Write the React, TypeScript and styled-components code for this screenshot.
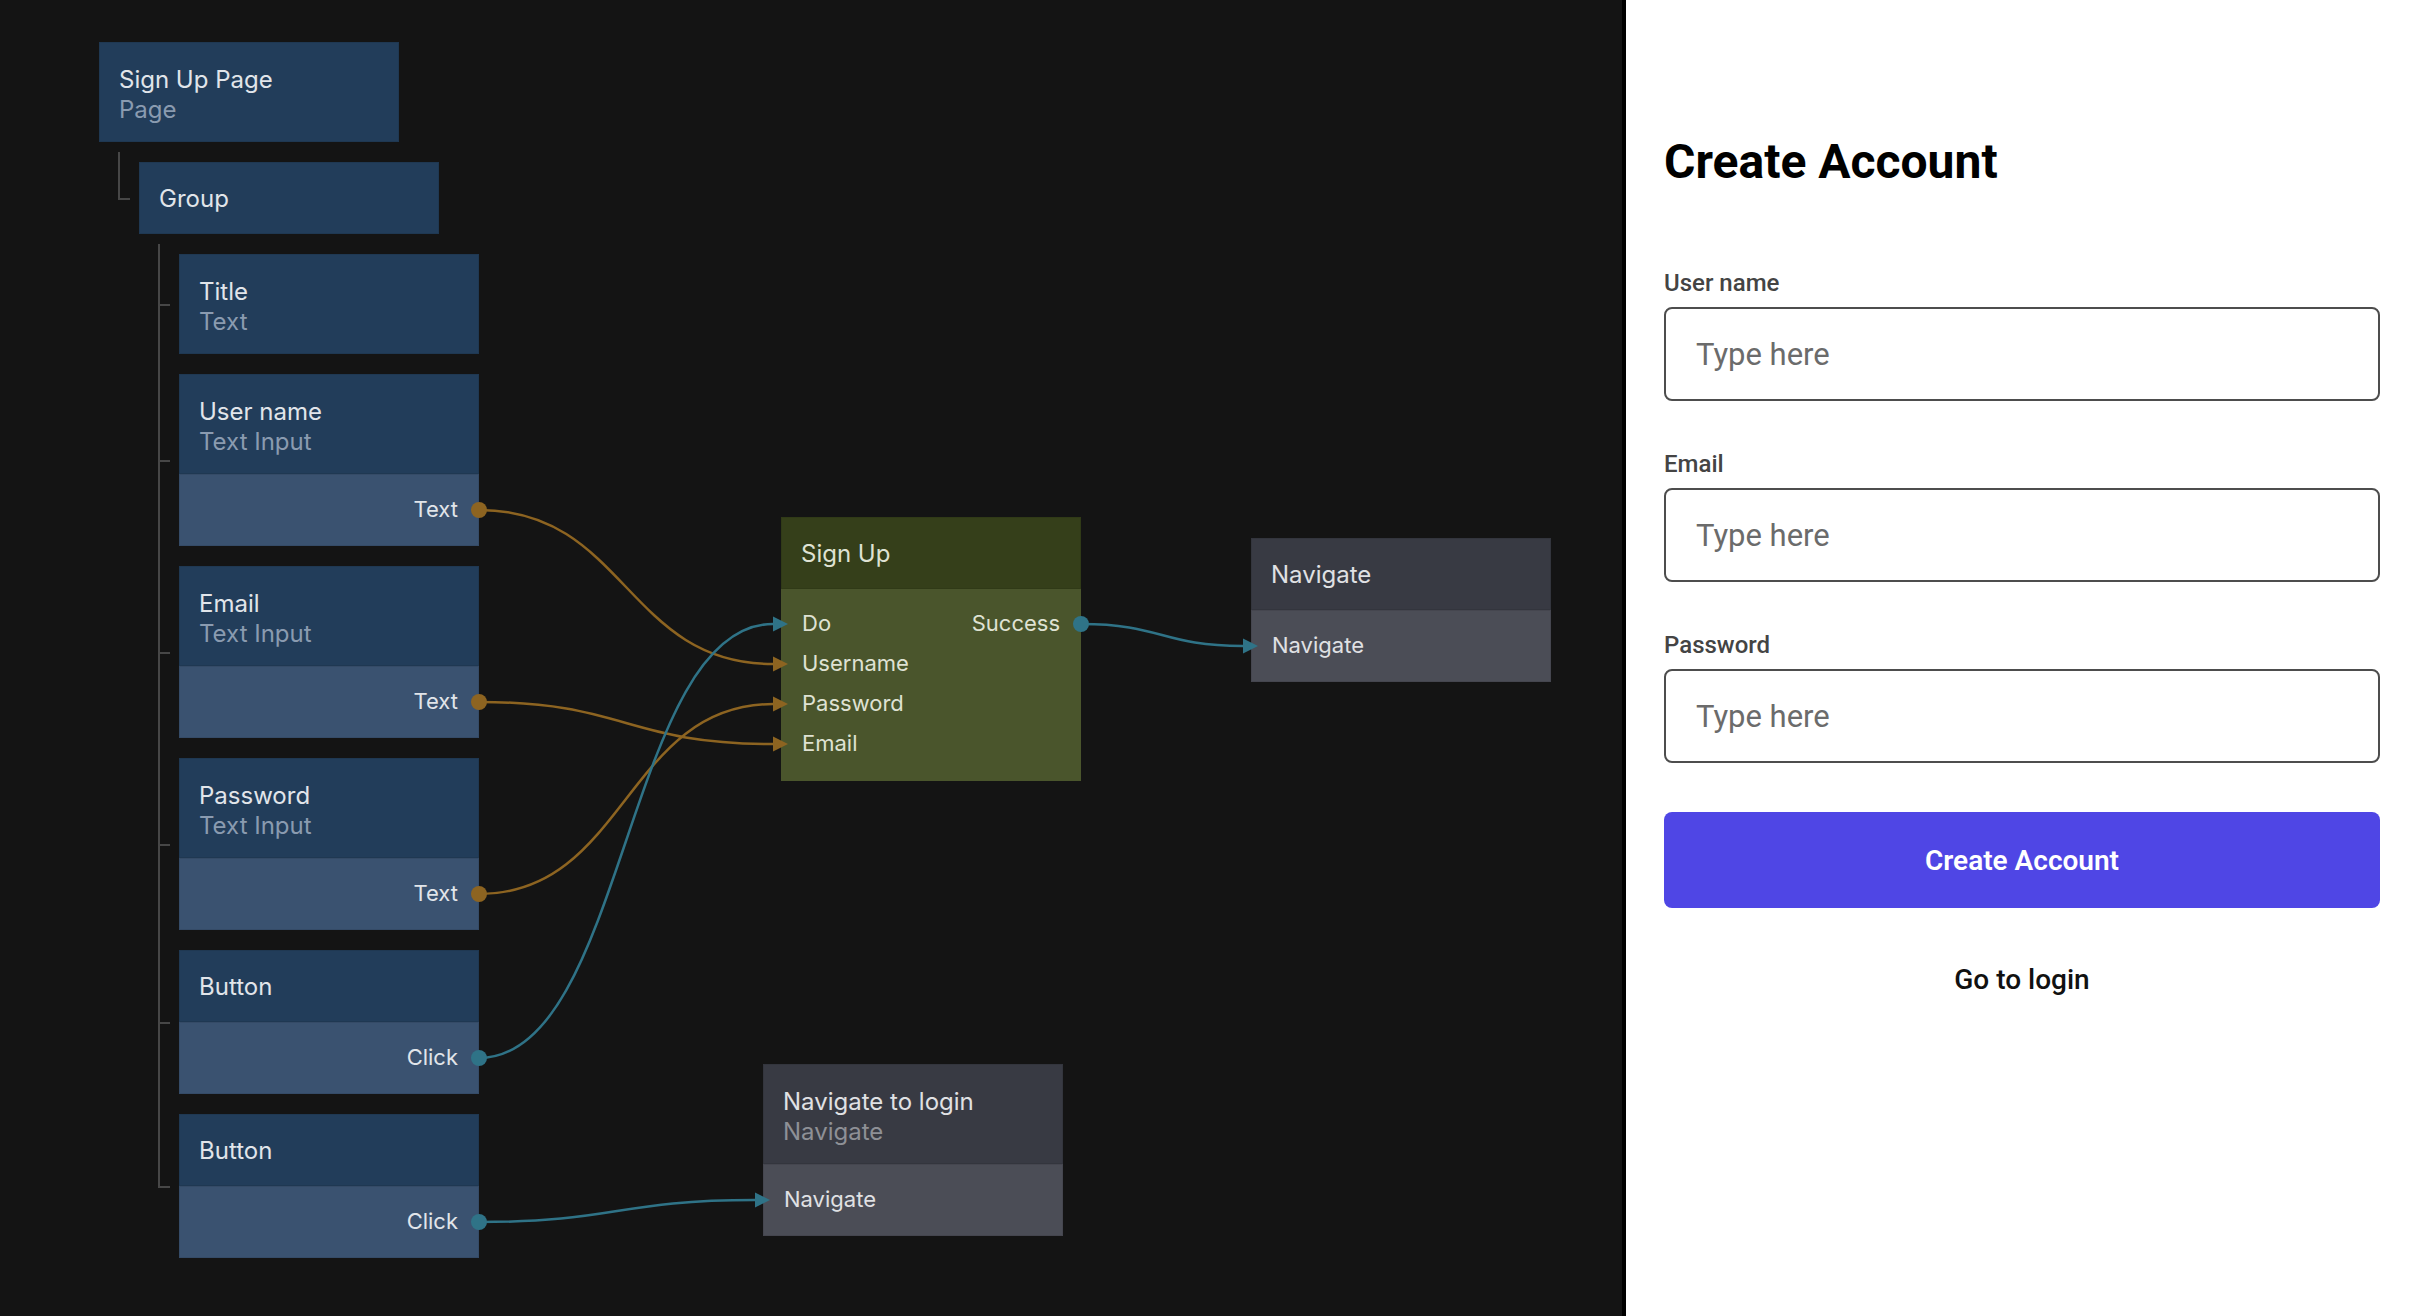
import React from 'react';
import styled, { createGlobalStyle, css } from 'styled-components';

const GlobalStyle = createGlobalStyle`
  html, body {
    margin: 0;
    padding: 0;
    width: 2418px;
    height: 1316px;
    overflow: hidden;
    background: #141414;
  }
  #root { height: 100%; }
  * { box-sizing: border-box; }
`;

type Variant = 'blue' | 'green' | 'gray';

const palette: Record<Variant, { head: string; body: string; title: string; sub: string }> = {
  blue: { head: '#223d5a', body: '#3a5270', title: '#e1e5ea', sub: '#8a9bb0' },
  green: { head: '#353f1a', body: '#4a552c', title: '#dfe2d3', sub: '#a0a68a' },
  gray: { head: '#383a43', body: '#4b4d56', title: '#e0e1e4', sub: '#8e9096' },
};

const ORANGE = '#8d6421';
const TEAL = '#2f7387';
const LINE = '#474747';

/* ---------- page ---------- */

const Screen = styled.div`
  display: flex;
  width: 2418px;
  height: 1316px;
`;

const Canvas = styled.div`
  position: relative;
  flex: 0 0 1622px;
  height: 100%;
  background: #141414;
  font-family: Inter, 'Noto Sans', sans-serif;
  overflow: hidden;
`;

/* ---------- nodes ---------- */

type TreePos = 'first' | 'middle' | 'last' | 'only';

const NodeCard = styled.div<{ $tree?: TreePos }>`
  position: relative;
  width: 300px;
  display: flex;
  flex-direction: column;
  flex: none;

  ${({ $tree }) =>
    $tree &&
    css`
      &::before {
        content: '';
        position: absolute;
        left: -21px;
        width: 10px;
        top: ${$tree === 'first' || $tree === 'only' ? '-10px' : '-20px'};
        height: calc(50% + ${$tree === 'first' || $tree === 'only' ? '10px' : '20px'});
        border-left: 2px solid ${LINE};
        border-bottom: 2px solid ${LINE};
      }
    `}

  ${({ $tree }) =>
    ($tree === 'first' || $tree === 'middle') &&
    css`
      &::after {
        content: '';
        position: absolute;
        left: -21px;
        top: 50%;
        bottom: 0;
        border-left: 2px solid ${LINE};
      }
    `}
`;

const FloatingNode = styled(NodeCard)`
  position: absolute;
`;

const NodeHeader = styled.div<{ $variant: Variant; $tall?: boolean }>`
  height: ${({ $tall }) => ($tall ? 100 : 72)}px;
  padding: ${({ $tall }) => ($tall ? 5 : 1)}px 20px 0 20px;
  display: flex;
  flex-direction: column;
  justify-content: center;
  background: ${({ $variant }) => palette[$variant].head};
  box-shadow: inset 0 0 0 1px rgba(0, 0, 0, 0.08);
`;

const NodeTitle = styled.div<{ $variant: Variant }>`
  font-size: 24px;
  line-height: 30px;
  color: ${({ $variant }) => palette[$variant].title};
  white-space: nowrap;
`;

const NodeSubtitle = styled.div<{ $variant: Variant }>`
  font-size: 24px;
  line-height: 30px;
  color: ${({ $variant }) => palette[$variant].sub};
  white-space: nowrap;
`;

const PortRow = styled.div<{ $variant: Variant; $side: 'in' | 'out' }>`
  height: 72px;
  display: flex;
  align-items: center;
  justify-content: ${({ $side }) => ($side === 'out' ? 'flex-end' : 'flex-start')};
  padding: 0 21px 3px 21px;
  background: ${({ $variant }) => palette[$variant].body};
  font-size: 22px;
  line-height: 30px;
  color: ${({ $variant }) => palette[$variant].title};
  box-shadow: inset 0 0 0 1px rgba(0, 0, 0, 0.08);
`;

const PortList = styled.div<{ $variant: Variant }>`
  display: flex;
  flex-direction: column;
  padding: 15px 21px 17px 21px;
  background: ${({ $variant }) => palette[$variant].body};
  color: ${({ $variant }) => palette[$variant].title};
`;

const PortLine = styled.div`
  height: 40px;
  padding-bottom: 2px;
  display: flex;
  align-items: center;
  justify-content: space-between;
  font-size: 22px;
  line-height: 30px;
`;

/* ---------- tree ---------- */

const Tree = styled.div`
  position: absolute;
  left: 99px;
  top: 42px;
  display: flex;
  flex-direction: column;
  gap: 20px;
`;

const Children = styled.div`
  display: flex;
  flex-direction: column;
  gap: 20px;
  margin-left: 40px;
`;

/* ---------- wires ---------- */

const WireLayer = styled.svg`
  position: absolute;
  left: 0;
  top: 0;
  width: 100%;
  height: 100%;
  pointer-events: none;
  overflow: visible;
`;

type Wire = { from: [number, number]; to: [number, number]; color: string };

const wires: Wire[] = [
  { from: [479, 510], to: [781, 664], color: ORANGE },
  { from: [479, 702], to: [781, 744], color: ORANGE },
  { from: [479, 894], to: [781, 704], color: ORANGE },
  { from: [479, 1058], to: [781, 624], color: TEAL },
  { from: [479, 1222], to: [763, 1200], color: TEAL },
  { from: [1081, 624], to: [1251, 646], color: TEAL },
];

const wirePath = (w: Wire) => {
  const [x0, y0] = w.from;
  const x1 = w.to[0] - 8;
  const y1 = w.to[1];
  const c = Math.abs(x1 - x0) / 2;
  return `M ${x0} ${y0} C ${x0 + c} ${y0}, ${x1 - c} ${y1}, ${x1} ${y1}`;
};

const arrow = (w: Wire) => {
  const [x, y] = w.to;
  return `${x - 8},${y - 7.5} ${x + 7},${y} ${x - 8},${y + 7.5}`;
};

/* ---------- preview panel ---------- */

const Panel = styled.div`
  flex: 1;
  height: 100%;
  background: #ffffff;
  border-left: 4px solid #000;
  padding: 135px 38px 0 38px;
  display: flex;
  flex-direction: column;
  font-family: Roboto, 'Liberation Sans', sans-serif;
`;

const Heading = styled.h1`
  margin: 0 0 81px 0;
  font-size: 48px;
  line-height: 53px;
  font-weight: 700;
  color: #000;
`;

const Form = styled.div`
  display: flex;
  flex-direction: column;
  gap: 49px;
`;

const Field = styled.label`
  display: flex;
  flex-direction: column;
  gap: 10px;
`;

const FieldLabel = styled.span`
  font-size: 24px;
  line-height: 28px;
  font-weight: 500;
  color: #444;
`;

const Input = styled.input`
  height: 94px;
  width: 100%;
  border: 2px solid #4d4d4d;
  border-radius: 8px;
  padding: 0 30px;
  font-family: Roboto, 'Liberation Sans', sans-serif;
  font-size: 31px;
  color: #222;
  background: #fff;
  outline: none;
  &::placeholder {
    color: #6b6b6b;
    opacity: 1;
  }
`;

const PrimaryButton = styled.button`
  height: 96px;
  width: 100%;
  border: none;
  border-radius: 8px;
  background: #4f46e5;
  color: #fff;
  font-family: Roboto, 'Liberation Sans', sans-serif;
  font-size: 28px;
  font-weight: 600;
  cursor: pointer;
`;

const LinkButton = styled.button`
  height: 44px;
  width: 100%;
  border: none;
  background: transparent;
  color: #111;
  font-family: Roboto, 'Liberation Sans', sans-serif;
  font-size: 28px;
  font-weight: 500;
  cursor: pointer;
`;

/* ---------- composition ---------- */

type TreeNodeProps = {
  title: string;
  subtitle?: string;
  port?: string;
  tree?: TreePos;
};

const TreeNode: React.FC<TreeNodeProps> = ({ title, subtitle, port, tree }) => (
  <NodeCard $tree={tree}>
    <NodeHeader $variant="blue" $tall={!!subtitle}>
      <NodeTitle $variant="blue">{title}</NodeTitle>
      {subtitle && <NodeSubtitle $variant="blue">{subtitle}</NodeSubtitle>}
    </NodeHeader>
    {port && (
      <PortRow $variant="blue" $side="out">
        {port}
      </PortRow>
    )}
  </NodeCard>
);

const children: TreeNodeProps[] = [
  { title: 'Title', subtitle: 'Text' },
  { title: 'User name', subtitle: 'Text Input', port: 'Text' },
  { title: 'Email', subtitle: 'Text Input', port: 'Text' },
  { title: 'Password', subtitle: 'Text Input', port: 'Text' },
  { title: 'Button', port: 'Click' },
  { title: 'Button', port: 'Click' },
];

export default function App() {
  return (
    <>
      <GlobalStyle />
      <Screen>
        <Canvas>
          <Tree>
            <TreeNode title="Sign Up Page" subtitle="Page" />
            <Children>
              <NodeCard $tree="only">
                <NodeHeader $variant="blue">
                  <NodeTitle $variant="blue">Group</NodeTitle>
                </NodeHeader>
              </NodeCard>
              <Children>
                {children.map((c, i) => (
                  <TreeNode
                    key={i}
                    {...c}
                    tree={i === 0 ? 'first' : i === children.length - 1 ? 'last' : 'middle'}
                  />
                ))}
              </Children>
            </Children>
          </Tree>

          <FloatingNode style={{ left: 781, top: 517 }}>
            <NodeHeader $variant="green">
              <NodeTitle $variant="green">Sign Up</NodeTitle>
            </NodeHeader>
            <PortList $variant="green">
              <PortLine>
                <span>Do</span>
                <span>Success</span>
              </PortLine>
              <PortLine>
                <span>Username</span>
              </PortLine>
              <PortLine>
                <span>Password</span>
              </PortLine>
              <PortLine>
                <span>Email</span>
              </PortLine>
            </PortList>
          </FloatingNode>

          <FloatingNode style={{ left: 1251, top: 538 }}>
            <NodeHeader $variant="gray">
              <NodeTitle $variant="gray">Navigate</NodeTitle>
            </NodeHeader>
            <PortRow $variant="gray" $side="in">
              Navigate
            </PortRow>
          </FloatingNode>

          <FloatingNode style={{ left: 763, top: 1064 }}>
            <NodeHeader $variant="gray" $tall>
              <NodeTitle $variant="gray">Navigate to login</NodeTitle>
              <NodeSubtitle $variant="gray">Navigate</NodeSubtitle>
            </NodeHeader>
            <PortRow $variant="gray" $side="in">
              Navigate
            </PortRow>
          </FloatingNode>

          <WireLayer viewBox="0 0 1622 1316">
            {wires.map((w, i) => (
              <path key={`p${i}`} d={wirePath(w)} fill="none" stroke={w.color} strokeWidth={2.5} />
            ))}
            {wires.map((w, i) => (
              <circle key={`c${i}`} cx={w.from[0]} cy={w.from[1]} r={8} fill={w.color} />
            ))}
            {wires.map((w, i) => (
              <polygon key={`a${i}`} points={arrow(w)} fill={w.color} />
            ))}
          </WireLayer>
        </Canvas>

        <Panel>
          <Heading>Create Account</Heading>
          <Form>
            <Field>
              <FieldLabel>User name</FieldLabel>
              <Input placeholder="Type here" />
            </Field>
            <Field>
              <FieldLabel>Email</FieldLabel>
              <Input placeholder="Type here" />
            </Field>
            <Field>
              <FieldLabel>Password</FieldLabel>
              <Input placeholder="Type here" type="password" />
            </Field>
            <PrimaryButton>Create Account</PrimaryButton>
            <LinkButton>Go to login</LinkButton>
          </Form>
        </Panel>
      </Screen>
    </>
  );
}
